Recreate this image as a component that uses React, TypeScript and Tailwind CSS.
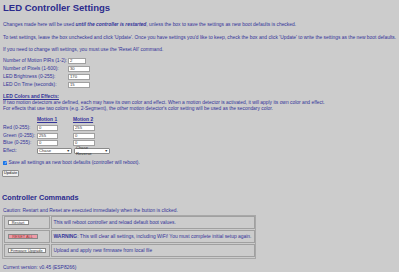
import React from "react";

const ff = { fontFamily: '"Liberation Sans", Arial, sans-serif' };

function TInput({ w, v }: { w: string; v: string }) {
  return (
    <div className={`${w} h-[6px] bg-white border-[0.5px] border-[#a0a0a0] flex items-center pl-[1px] text-[4.2px] leading-[6px] text-[#333]`}>
      {v}
    </div>
  );
}

function Sel({ w, v }: { w: string; v: string }) {
  return (
    <div className={`${w} h-[6px] bg-white border-[0.5px] border-[#8a8a8a] rounded-[1px] flex items-center justify-between px-[1px] text-[4.2px] leading-[6px] text-[#333]`}>
      <span>{v}</span>
      <span className="text-[3.5px]">▼</span>
    </div>
  );
}

export default function App() {
  return (
    <div style={ff} className="w-[399px] h-[272px] overflow-hidden bg-[#cccccc] pl-[3px] text-[#333399] text-[4.9px]">
      <h1 className="h-[16px] leading-[16px] text-[9.5px] font-bold text-[#2b2b8c]">LED Controller Settings</h1>
      <p className="mt-[6px] leading-[6px] whitespace-nowrap">
        Changes made here will be used <b><i>until the controller is restarted</i></b>, unless the box to save the settings as new boot defaults is checked.
      </p>
      <p className="mt-[7px] leading-[6px] whitespace-nowrap">
        To test settings, leave the box unchecked and click 'Update'. Once you have settings you'd like to keep, check the box and click 'Update' to write the settings as the new boot defaults.
      </p>
      <p className="mt-[6px] leading-[6px] whitespace-nowrap">
        If you need to change wifi settings, you must use the 'Reset All' command.
      </p>

      <div className="mt-[4px] flex flex-col">
        {[
          ["Number of Motion PIRs (1-2):", "2", "w-[18px]"],
          ["Number of Pixels (1-600):", "30", "w-[22px]"],
          ["LED Brightness (0-255):", "170", "w-[22px]"],
          ["LED On Time (seconds):", "15", "w-[22px]"],
        ].map(([l, v, w]) => (
          <div key={l} className="h-[8px] flex items-center">
            <div className="w-[65px] leading-[6px]">{l}</div>
            <TInput w={w} v={v} />
          </div>
        ))}
      </div>

      <div className="mt-[5px] leading-[6px] font-bold underline">LED Colors and Effects:</div>
      <p className="leading-[6px] whitespace-nowrap">
        If two motion detectors are defined, each may have its own color and effect. When a motion detector is activated, it will apply its own color and effect.
      </p>
      <p className="leading-[6px] whitespace-nowrap">
        For effects that use two colors (e.g. 2-Segment), the other motion detector's color setting will be used as the secondary color.
      </p>

      <div className="mt-[4px] h-[8px] flex items-center font-bold underline">
        <div className="w-[34px]" />
        <div className="w-[36px]">Motion 1</div>
        <div>Motion 2</div>
      </div>
      {[
        ["Red (0-255):", "0", "255"],
        ["Green (0-255):", "255", "0"],
        ["Blue (0-255):", "0", "0"],
      ].map(([l, a, b]) => (
        <div key={l} className="h-[7.7px] flex items-center">
          <div className="w-[34px] leading-[6px]">{l}</div>
          <div className="w-[36px]"><TInput w="w-[21px]" v={a} /></div>
          <TInput w="w-[22px]" v={b} />
        </div>
      ))}
      <div className="h-[7.7px] flex items-center">
        <div className="w-[34px] leading-[6px]">Effect:</div>
        <div className="w-[37px]"><Sel w="w-[35px]" v="Chase" /></div>
        <Sel w="w-[36px]" v="Chase Reverse" />
      </div>

      <div className="mt-[4px] h-[8px] flex items-center gap-[1.5px]">
        <div className="w-[4px] h-[4px] bg-[#1a73e8] rounded-[0.5px] flex items-center justify-center text-white text-[3.5px] leading-[4px]">✓</div>
        <span className="leading-[6px]">Save all settings as new boot defaults (controller will reboot).</span>
      </div>

      <div className="mt-[3px] -ml-[1px] w-[17px] h-[7px] bg-[#efefef] border-[0.5px] border-[#8f8f8f] rounded-[1px] flex items-center justify-center text-[4.2px] text-[#222]">
        Update
      </div>

      <h2 className="mt-[16px] -ml-[1px] h-[10px] leading-[10px] text-[7.3px] font-bold text-[#2b2b8c]">Controller Commands</h2>
      <p className="mt-[5px] leading-[6px] whitespace-nowrap">
        Caution: Restart and Reset are executed immediately when the button is clicked.
      </p>

      <div className="mt-[1px] -ml-[1px] w-[254px] border-[1px] border-[#a8a8a8] bg-[#cccccc] p-[0.5px] flex flex-col gap-[1px]">
        {[
          { btn: "Restart", bw: "w-[21px]", pink: false, desc: <>This will reboot controller and reload default boot values.</> },
          {
            btn: "RESET ALL",
            bw: "w-[30px]",
            pink: true,
            desc: (
              <>
                <b>WARNING</b>: This will clear all settings, including WiFi! You must complete initial setup again.
              </>
            ),
          },
          { btn: "Firmware Upgrade", bw: "w-[38px]", pink: false, desc: <>Upload and apply new firmware from local file</> },
        ].map((r) => (
          <div key={r.btn} className="h-[13px] flex gap-[1px]">
            <div className="w-[46px] border-[0.5px] border-[#a0a0a0] flex items-center pl-[3px]">
              <div
                className={`${r.bw} h-[5px] border-[0.5px] border-[#888] flex items-center justify-center text-[3.9px] leading-[5px] ${
                  r.pink ? "bg-[#ee9aa6] text-[#933]" : "bg-white text-[#333]"
                }`}
              >
                {r.btn}
              </div>
            </div>
            <div className="flex-1 border-[0.5px] border-[#a0a0a0] flex items-center pl-[2px] leading-[6px] whitespace-nowrap">
              {r.desc}
            </div>
          </div>
        ))}
      </div>

      <p className="mt-[6px] leading-[6px]">Current version: v0.45 (ESP8266)</p>
    </div>
  );
}
